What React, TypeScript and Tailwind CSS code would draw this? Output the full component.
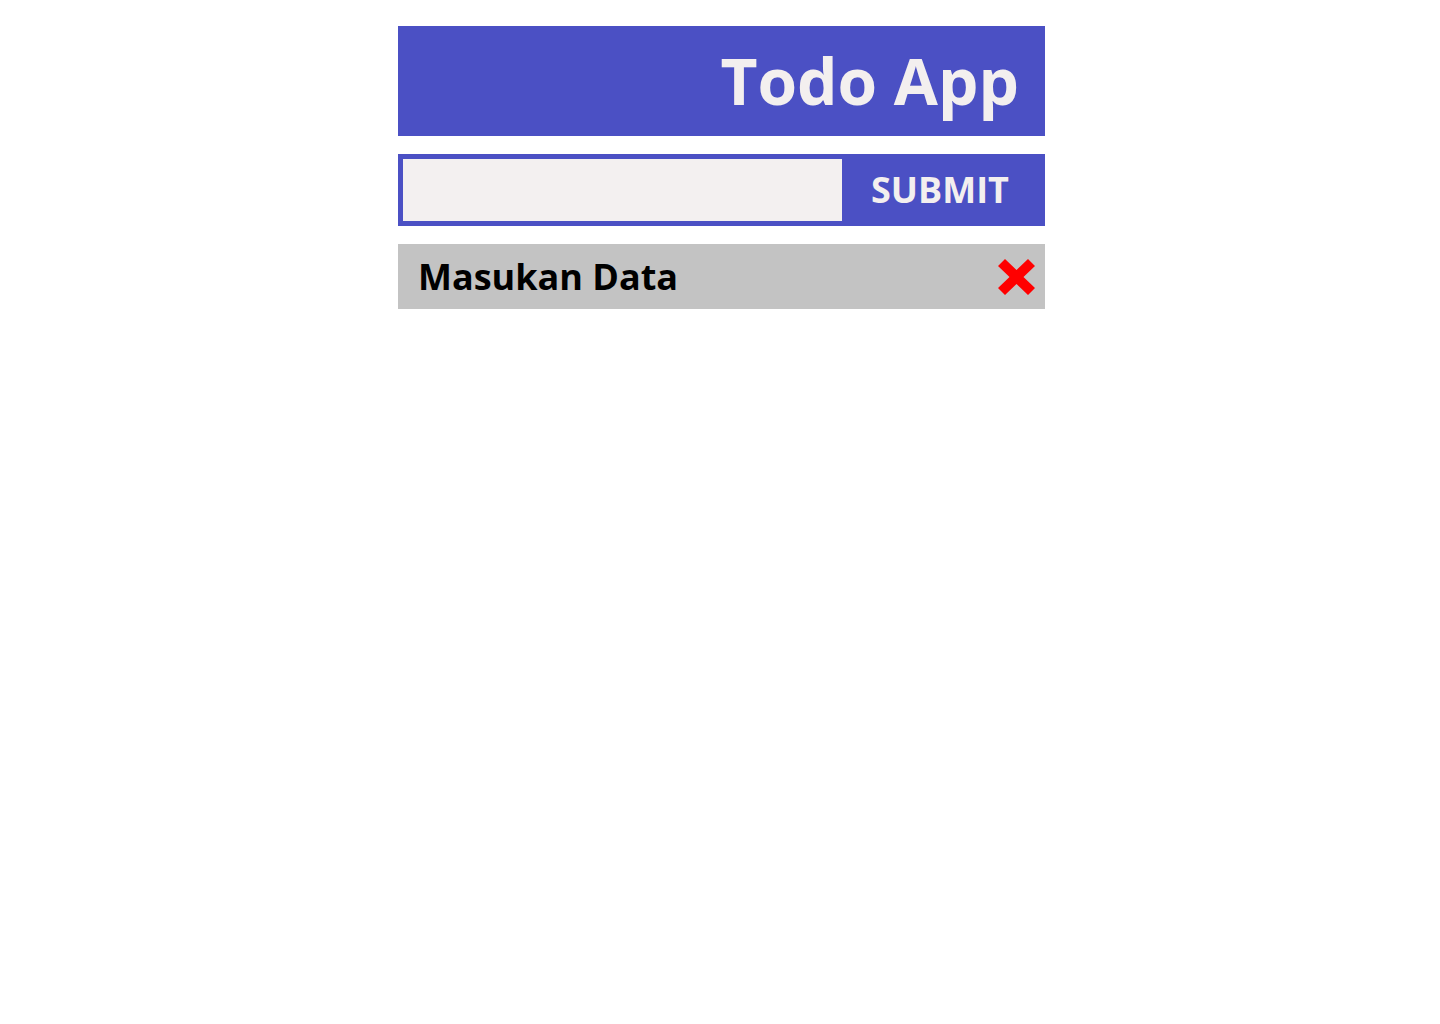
import React, { useState } from 'react'

const font = { fontFamily: '"Open Sans", "Noto Sans", sans-serif' }

function DeleteIcon() {
  return (
    <svg width="37" height="36" viewBox="0 0 37 36">
      <path d="M0 7 L7 0 L18.5 11 L30 0 L37 7 L25.5 18 L37 29 L30 36 L18.5 25 L7 36 L0 29 L11.5 18 Z" fill="#ff0000" />
    </svg>
  )
}

export default function App() {
  const [todos] = useState(['Masukan Data'])
  const [text, setText] = useState('')

  return (
    <div className="min-h-screen bg-white pt-[26px]" style={font}>
      <div className="ml-[398px] w-[647px] flex flex-col gap-[18px]">
        {/* Header */}
        <header className="h-[110px] bg-[#4b50c4] flex items-center justify-end pr-[26px]">
          <h1 className="text-[64px] font-bold text-[#f3efef] leading-none">Todo App</h1>
        </header>

        {/* Form */}
        <form className="h-[72px] bg-[#4b50c4] p-[5px] flex" onSubmit={e => e.preventDefault()}>
          <input
            value={text}
            onChange={e => setText(e.target.value)}
            className="w-[439px] h-full bg-[#f3f0f0] outline-none px-3 text-2xl"
          />
          <button className="flex-1 text-[36px] font-bold text-[#f3efef] leading-none flex items-center justify-center pr-[2px]">
            SUBMIT
          </button>
        </form>

        {/* List */}
        <ul className="flex flex-col gap-[18px]">
          {todos.map(t => (
            <li key={t} className="h-[65px] bg-[#c3c3c3] flex items-center justify-between pl-[20px] pr-[10px]">
              <span className="text-[36px] font-bold text-black leading-none">{t}</span>
              <DeleteIcon />
            </li>
          ))}
        </ul>
      </div>
    </div>
  )
}
